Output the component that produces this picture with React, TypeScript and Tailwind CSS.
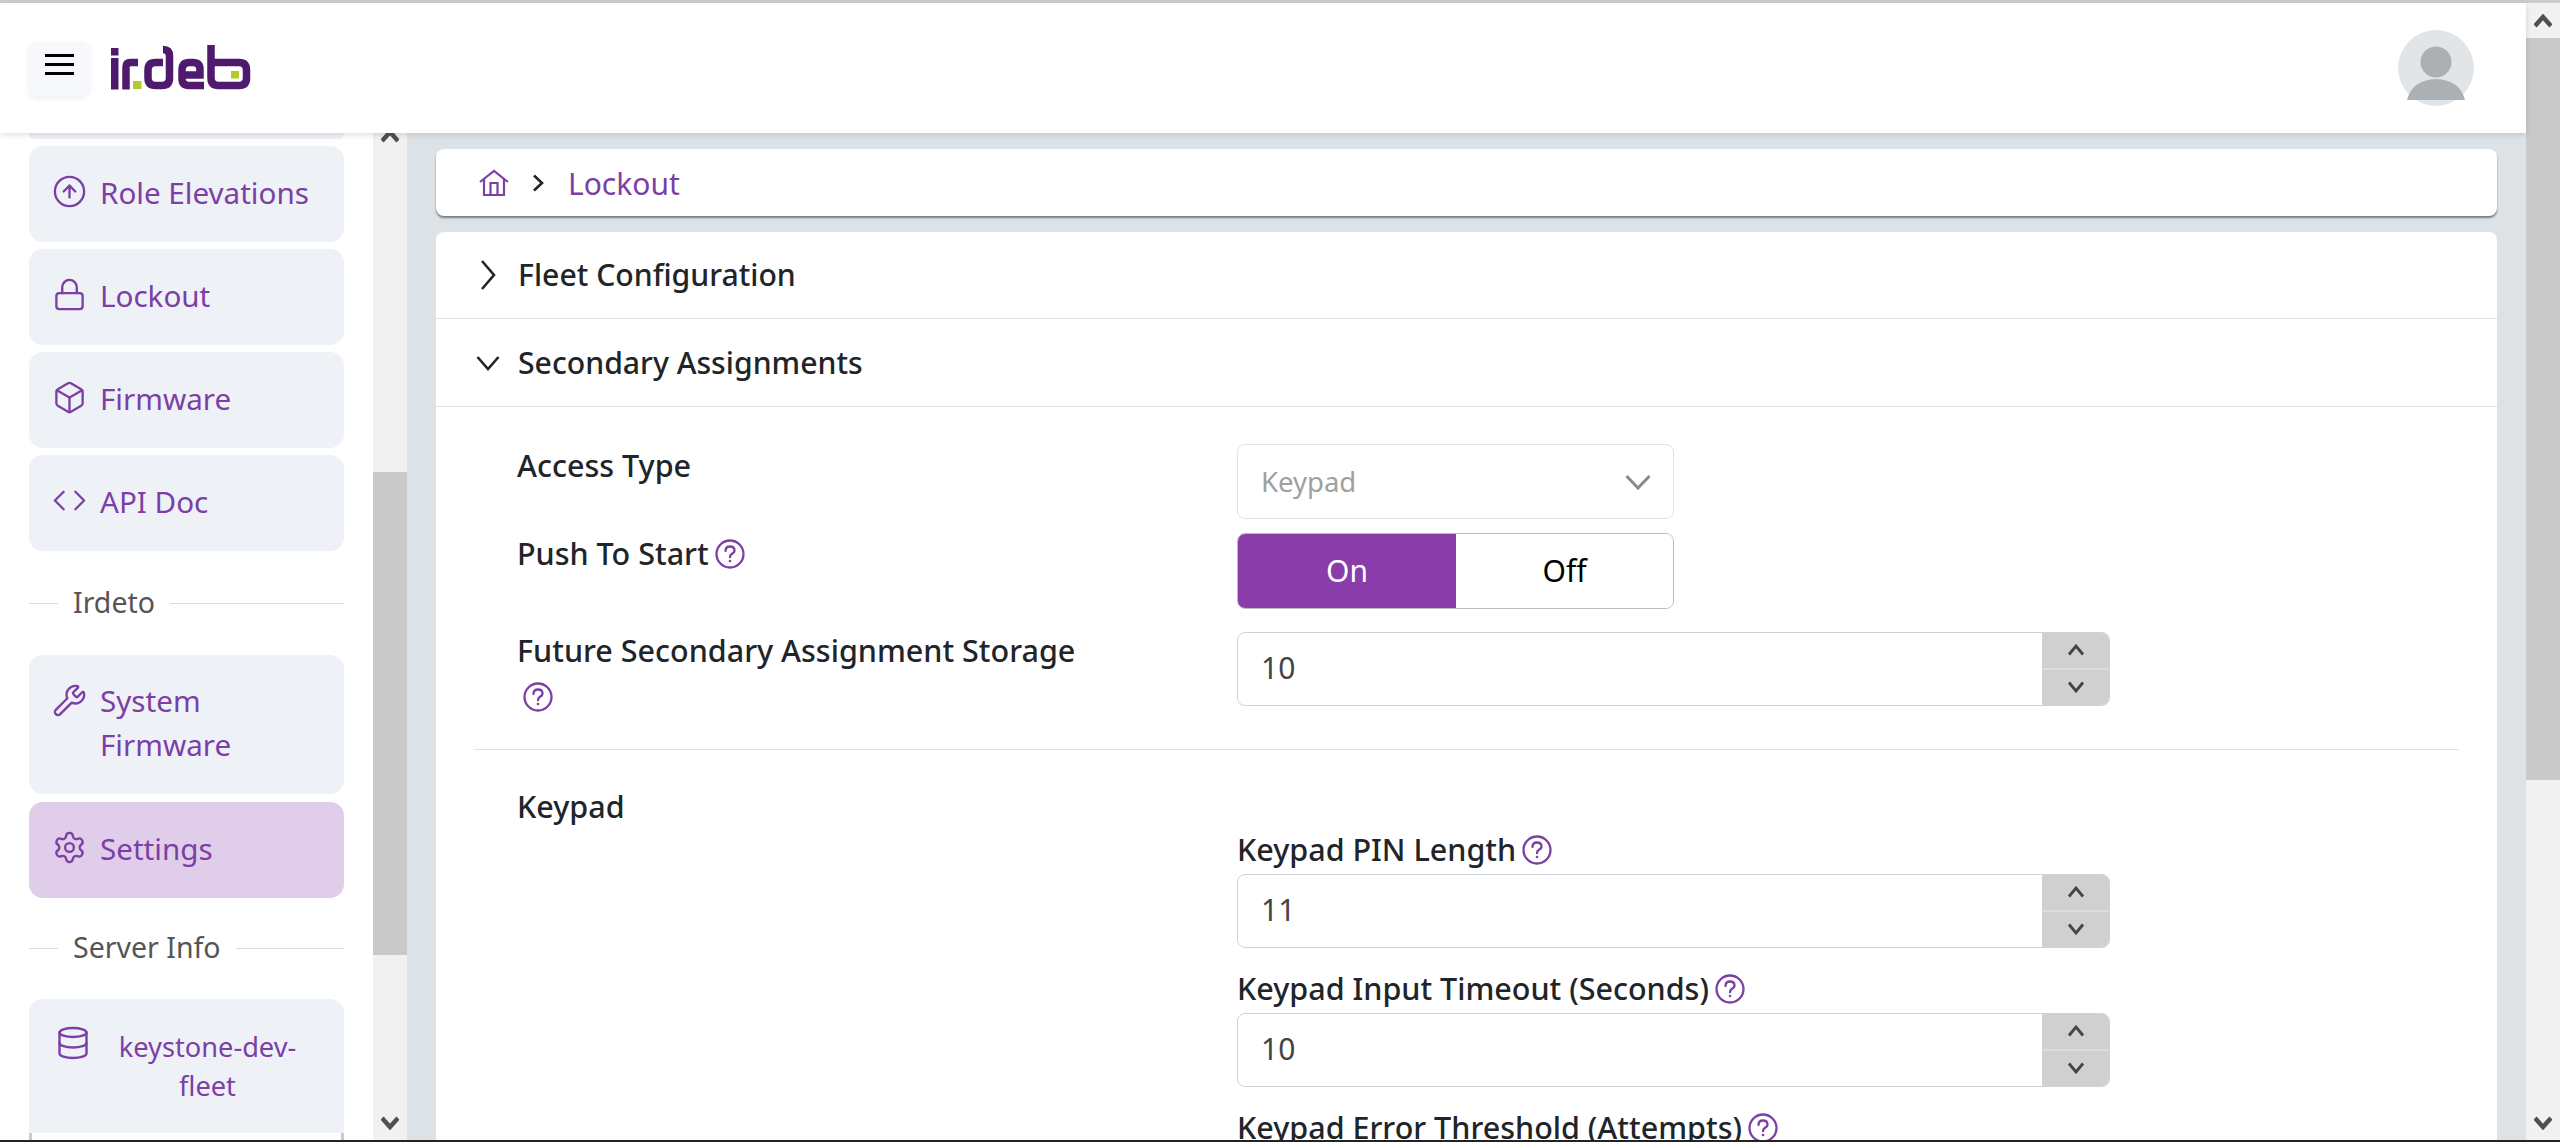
import { ArrowUpCircle, Lock, Box, Code, Wrench, Settings, Database } from 'lucide-react';

const sansFont = '[font-family:"Noto_Sans",sans-serif]';
const labelText = 'text-[30.5px] font-medium text-[#212529]';

const navTop = [
  { label: 'Role Elevations', icon: ArrowUpCircle },
  { label: 'Lockout', icon: Lock },
  { label: 'Firmware', icon: Box },
  { label: 'API Doc', icon: Code },
];

const ScrollArrow = ({ down }: { down?: boolean }) => (
  <svg width="18" height="14" viewBox="0 0 18 14">
    <path d={down ? 'M1 2l8 9 8-9' : 'M1 12l8-9 8 9'} fill="none" stroke="#505050" strokeWidth="4.500" />
  </svg>
);

const Scrollbar = ({ thumbClass, topClass }: { thumbClass: string; topClass: string }) => (
  <div className="flex w-[34px] shrink-0 flex-col bg-[#f1f1f1]">
    <div className={`flex shrink-0 items-center justify-center ${topClass}`}><ScrollArrow /></div>
    <div className={`bg-[#c9c9c9] ${thumbClass}`} />
    <div className="flex-1" />
    <div className="flex h-[34px] shrink-0 items-center justify-center"><ScrollArrow down /></div>
  </div>
);

const NavCard = ({ label, icon: Icon, active }: { label: string; icon: typeof Lock; active?: boolean }) => (
  <div className={`flex h-[96px] items-center gap-[13px] rounded-[14px] pl-[23px] text-[#7b3fa6] ${active ? 'bg-[#e0cde9]' : 'bg-[#eef1f6]'}`}>
    <Icon className="-mt-[6px] h-[35px] w-[35px]" strokeWidth={1.6} />
    <span className="-mt-[2px] text-[29.6px]">{label}</span>
  </div>
);

const SectionTitle = ({ label }: { label: string }) => (
  <div className="flex h-[52px] items-center">
    <div className="h-px w-[29px] bg-[#dddddd]" />
    <span className="-mt-[2px] px-[15px] text-[28.5px] text-[#555555]">{label}</span>
    <div className="h-px flex-1 bg-[#dddddd]" />
  </div>
);

const Help = () => (
  <svg width="30" height="30" viewBox="0 0 30 30" className="inline-block shrink-0" fill="none" stroke="#7b3fa6" strokeWidth="2.300">
    <circle cx="15" cy="15" r="13.500" />
    <path d="M10.500 12q0-4.500 4.500-4.500t4.500 4q0 2-2.800 3.500q-1.700 1-1.700 3.200" strokeLinecap="round" />
    <circle cx="15" cy="22" r="1.300" fill="#7b3fa6" stroke="none" />
  </svg>
);

const NumberInput = ({ value }: { value: string }) => (
  <div className="flex h-[74px] w-[873px] overflow-hidden rounded-[8px] border border-[#cfd2d6] bg-white">
    <div className="flex flex-1 items-center pb-[3px] pl-[23px] text-[30px] text-[#444444]">{value}</div>
    <div className="flex w-[67px] flex-col bg-[#d0d0d0]">
      <div className="flex flex-1 items-center justify-center border-b-2 border-[#dcdcdc] pb-[2px]">
        <svg width="18" height="12" viewBox="0 0 18 12"><path d="M2 10.500 9 2l7 8.500" fill="none" stroke="#444444" strokeWidth="2.800" /></svg>
      </div>
      <div className="flex flex-1 items-center justify-center pb-[2px]">
        <svg width="18" height="12" viewBox="0 0 18 12"><path d="M2 1.500 9 10l7-8.500" fill="none" stroke="#444444" strokeWidth="2.800" /></svg>
      </div>
    </div>
  </div>
);

const KeypadField = ({ label, value }: { label: string; value: string }) => (
  <div className="mb-[25px]">
    <div className={`mb-[8px] flex h-[32px] items-center gap-[6px] ${labelText}`}>
      {label}
      <Help />
    </div>
    <NumberInput value={value} />
  </div>
);

const Logo = () => (
  <svg width="140" height="45" viewBox="0 0 140 45" className="-mt-[2px] ml-[22px]">
    <g fill="none" stroke="#4f1a6e" strokeWidth="7.500">
      <path d="M3.750 13v31.500" />
      <path d="M15 44.500V22q0-4.500 4.500-4.500H27" />
      <path d="M52 4.500q6.500 0 6.500 6.500v22q0 7.500-7.500 7.500h-6.500q-7.500 0-7.500-7.500v-8q0-7.500 7.500-7.500H52" />
      <path d="M93 40.500H78q-7 0-7-7V25q0-7.500 7.500-7.500H82q7 0 7 7V30H74" />
      <path d="M100 0v33q0 7.500 7.500 7.500H128q7.500 0 7.500-7.500v-8q0-7.500-7.500-7.500H97" />
    </g>
    <rect y="3" width="7.500" height="7.500" fill="#4f1a6e" />
    <rect x="22" y="36" width="8.500" height="8" fill="#b5c92a" />
    <rect x="120" y="26" width="8" height="7.500" fill="#b5c92a" />
  </svg>
);

export default function App() {
  return (
    <div className={`flex h-[1142px] w-[2560px] flex-col overflow-hidden bg-white ${sansFont}`}>
      <div className="h-[3px] shrink-0 bg-[#cccccc]" />
      <div className="flex min-h-0 flex-1">
        <div className="flex min-w-0 flex-1 flex-col">
          {/* Header */}
          <header className="relative z-10 flex h-[130px] shrink-0 items-center bg-white pr-[52px] pl-[29px] shadow-[0_2px_6px_rgba(0,0,0,0.12)]">
            <button className="mt-[2px] flex h-[54px] w-[60px] flex-col items-center justify-center gap-[6px] rounded-[8px] bg-[#f6f8fb] pb-[10px] shadow-[0_2px_6px_rgba(0,0,0,0.08)]">
              <span className="h-[3px] w-[29px] bg-black" />
              <span className="h-[3px] w-[29px] bg-black" />
              <span className="h-[3px] w-[29px] bg-black" />
            </button>
            <Logo />
            <svg width="76" height="76" viewBox="0 0 76 76" className="ml-auto">
              <circle cx="38" cy="38" r="38" fill="#e2e5e7" />
              <circle cx="38" cy="32" r="15.500" fill="#aab0b4" />
              <path d="M9 70q5-20 29-21q24 1 29 21z" fill="#aab0b4" />
            </svg>
          </header>

          <div className="flex min-h-0 flex-1">
            {/* Sidebar */}
            <aside className="flex w-[373px] shrink-0 flex-col overflow-hidden bg-white px-[29px]">
              <div className="mb-[7px] h-[6px] shrink-0 rounded-b-[14px] bg-[#eef1f6]" />
              <div className="flex flex-col gap-[7px]">
                {navTop.map(item => <NavCard key={item.label} label={item.label} icon={item.icon} />)}
              </div>
              <div className="mt-[26px] mb-[26px]"><SectionTitle label="Irdeto" /></div>
              <div className="flex h-[139px] gap-[13px] rounded-[14px] bg-[#eef1f6] pt-[24px] pl-[23px] text-[#7b3fa6]">
                <Wrench className="mt-[4px] h-[35px] w-[35px] shrink-0" strokeWidth={1.6} />
                <span className="w-[170px] text-[29.6px] leading-[44px]">System Firmware</span>
              </div>
              <div className="mt-[8px]"><NavCard label="Settings" icon={Settings} active /></div>
              <div className="mt-[24px] mb-[25px]"><SectionTitle label="Server Info" /></div>
              <div className="flex h-[134px] shrink-0 rounded-t-[14px] bg-[#eef1f6] pt-[26px] pl-[26px] text-[#7b3fa6]">
                <Database className="h-[36px] w-[36px] shrink-0" strokeWidth={1.6} />
                <span className="w-[220px] pt-[2px] pl-[13px] text-center text-[27.2px] leading-[39px]">keystone-dev-fleet</span>
              </div>
              <div className="h-[7px] shrink-0 border-x-[3px] border-[#cccccc] bg-white" />
            </aside>
            <Scrollbar topClass="-mt-[7px] h-[20px]" thumbClass="mt-[326px] h-[483px]" />

            {/* Content */}
            <main className="min-w-0 flex-1 overflow-hidden bg-[#dde2e6] pt-[16px] pr-[29px] pl-[29px]">
              <div className="flex h-[67px] items-center rounded-[8px] bg-white pl-[43px] shadow-[0_2px_2px_rgba(0,0,0,0.45)]">
                <svg width="30" height="27" viewBox="0 0 30 27" fill="none" stroke="#7b3fa6" strokeWidth="2.200">
                  <path d="M1 13 15 2l14 11" />
                  <path d="M5 10v16h20V10" />
                  <path d="M11.500 26V14h7v12" />
                </svg>
                <svg width="12" height="18" viewBox="0 0 12 18" className="mr-[24px] ml-[23px]">
                  <path d="M2 1.500 10 9l-8 7.500" fill="none" stroke="#222222" strokeWidth="2.600" />
                </svg>
                <span className="mt-[2px] text-[30px] text-[#7b3fa6]">Lockout</span>
              </div>

              <section className="mt-[16px] rounded-t-[8px] bg-white">
                <div className="flex h-[87px] items-center border-b border-[#dfe2e5] pl-[44px] text-[30.2px] font-medium text-[#212529]">
                  <svg width="16" height="32" viewBox="0 0 16 32" className="mr-[22px]">
                    <path d="M2 2l12 14L2 30" fill="none" stroke="#212529" strokeWidth="2.600" />
                  </svg>
                  Fleet Configuration
                </div>
                <div className="flex h-[88px] items-center border-b border-[#dfe2e5] pl-[40px] text-[30.2px] font-medium text-[#212529]">
                  <svg width="24" height="16" viewBox="0 0 24 16" className="mr-[18px]">
                    <path d="M1.500 2 12 14 22.500 2" fill="none" stroke="#212529" strokeWidth="2.600" />
                  </svg>
                  Secondary Assignments
                </div>

                <div className="px-[38px] pt-[37px]">
                  <div className="border-b border-[#dfe2e5] pb-[34px]">
                    <div className="flex h-[89px]">
                      <div className={`w-[763px] pt-[1px] pl-[43px] leading-[40px] ${labelText}`}>Access Type</div>
                      <div className="flex h-[75px] w-[437px] items-center justify-between rounded-[8px] border border-[#e0e3e6] pr-[22px] pl-[23px] text-[27.5px] text-[#a0a0a0]">
                        Keypad
                        <svg width="26" height="16" viewBox="0 0 26 16"><path d="M1.500 2 13 14 24.500 2" fill="none" stroke="#8a8a8a" strokeWidth="3" /></svg>
                      </div>
                    </div>
                    <div className="flex h-[99px]">
                      <div className={`mt-[1px] flex h-[40px] w-[763px] items-center gap-[6px] pl-[43px] ${labelText}`}>Push To Start <Help /></div>
                      <div className="flex h-[76px] w-[437px] overflow-hidden rounded-[8px] border border-[#bdbdbd] text-[30px]">
                        <div className="flex w-[218px] items-center justify-center bg-[#8a3cab] pb-[2px] text-white">On</div>
                        <div className="flex flex-1 items-center justify-center bg-white pb-[2px] text-black">Off</div>
                      </div>
                    </div>
                    <div className="flex">
                      <div className={`-mt-[3px] w-[763px] pl-[43px] leading-[43px] ${labelText}`}>
                        Future Secondary Assignment Storage
                        <div className="pl-[6px]"><Help /></div>
                      </div>
                      <NumberInput value="10" />
                    </div>
                  </div>
                  <div className={`pt-[36px] pl-[43px] leading-[40px] ${labelText}`}>Keypad</div>
                  <div className="mt-[8px] pl-[763px]">
                    <KeypadField label="Keypad PIN Length" value="11" />
                    <KeypadField label="Keypad Input Timeout (Seconds)" value="10" />
                    <KeypadField label="Keypad Error Threshold (Attempts)" value="3" />
                  </div>
                </div>
              </section>
            </main>
          </div>
        </div>
        <Scrollbar topClass="h-[35px]" thumbClass="h-[742px]" />
      </div>
      <div className="h-[2px] shrink-0 bg-[#222222]" />
    </div>
  );
}
